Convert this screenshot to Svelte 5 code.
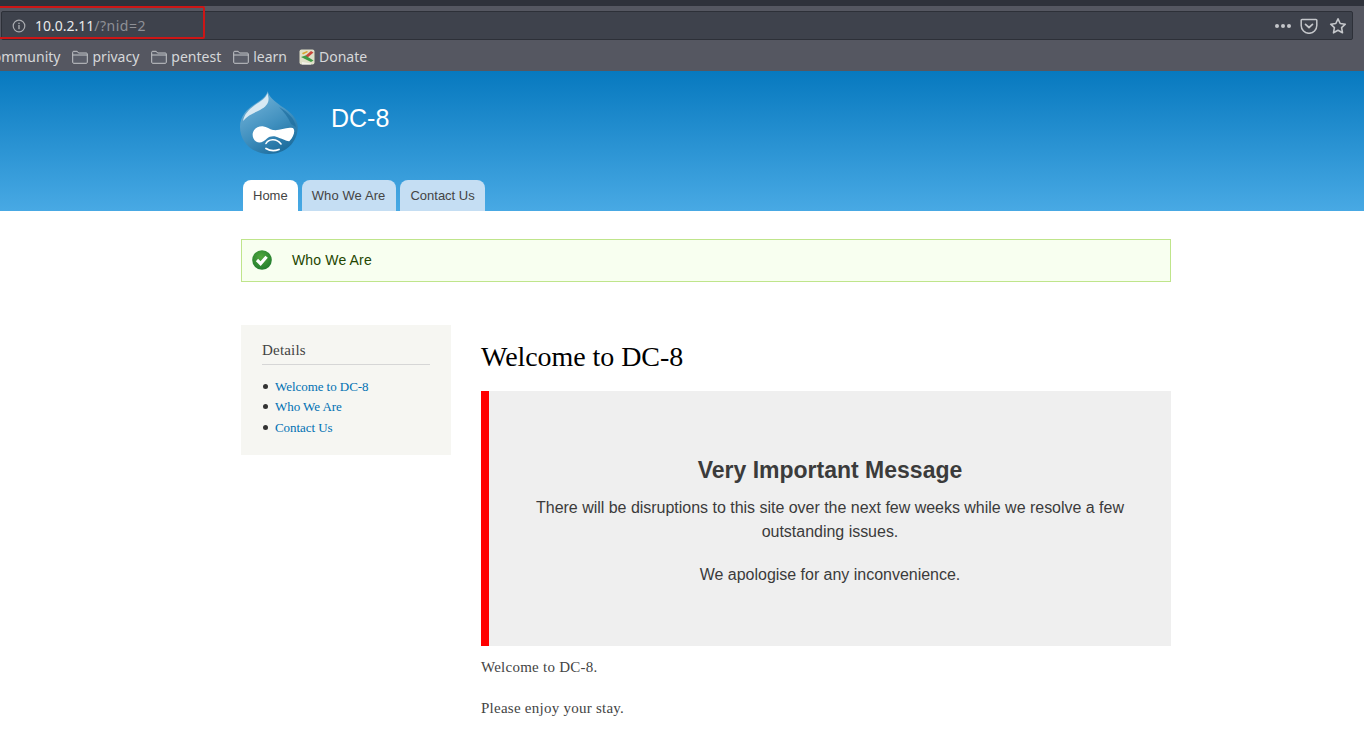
<script>
  const bookmarks = ['privacy', 'pentest', 'learn'];
  const tabs = ['Home', 'Who We Are', 'Contact Us'];
  const links = ['Welcome to DC-8', 'Who We Are', 'Contact Us'];
</script>

<div class="page">
  <div class="chrome">
    <div class="toprim"></div>
    <div class="urlrow">
      <div class="urlbar">
        <svg class="info" width="14" height="14" viewBox="0 0 14 14"><circle cx="7" cy="7" r="5.8" fill="none" stroke="#a9abb0" stroke-width="1.2"/><rect x="6.3" y="6" width="1.4" height="4.2" fill="#a9abb0"/><rect x="6.3" y="3.7" width="1.4" height="1.4" fill="#a9abb0"/></svg>
        <span class="url"><span class="host">10.0.2.11</span><span class="path">/?nid=2</span></span>
        <div class="spacer"></div>
        <div class="dots"><i></i><i></i><i></i></div>
        <svg class="pocket" width="18" height="16" viewBox="0 0 18 16"><path d="M2 1.5h14a.8.8 0 0 1 .8.8v5.2a7.8 7.8 0 0 1-15.600 0V2.300a.8.8 0 0 1 .8-.8z" fill="none" stroke="#c4c6ca" stroke-width="1.500"/><path d="M5.500 6.300 9 9.500l3.500-3.200" fill="none" stroke="#c4c6ca" stroke-width="1.700" stroke-linecap="round" stroke-linejoin="round"/></svg>
        <svg class="star" width="18" height="18" viewBox="0 0 18 18"><path d="M9 1.800l2.200 4.700 5.100.7-3.700 3.500.9 5.100L9 13.300l-4.500 2.500.9-5.100-3.700-3.500 5.100-.7z" fill="none" stroke="#c4c6ca" stroke-width="1.600" stroke-linejoin="round"/></svg>
      </div>
    </div>
    <div class="bookmarks">
      <span class="bm first">community</span>
      {#each bookmarks as b}
        <span class="bm">
          <svg width="16" height="14" viewBox="0 0 16 14"><path d="M.7 12.300V2.300q0-1 1-1h3.500l1.300 1.700h7.800q1 0 1 1v8.300q0 1-1 1H1.700q-1 0-1-1zM.7 5h14.600" fill="#5b5e69" stroke="#c3c5c9" stroke-width="1"/></svg>
          {b}
        </span>
      {/each}
      <span class="bm">
        <svg width="16" height="16" viewBox="0 0 16 16"><rect x="0.500" y="0.500" width="15" height="15" rx="2" fill="#dfe0c8"/><path d="M5 8 12 2l2.500 1.500-7 6z" fill="#c8473c"/><path d="M2 8l10 5 2.500-1.500-8-5z" fill="#3f9a46"/><path d="M3 13l9 1.500v1H3z" fill="#f2f2ea"/><path d="M3 4l5-2 1 1-5 2.500z" fill="#d9a62e"/></svg>
        Donate
      </span>
    </div>
    <div class="redbox"></div>
  </div>

  <header class="hero">
    <div class="inner">
      <div class="brand">
        <svg class="logo" width="60" height="66" viewBox="0 0 60 66">
          <defs>
            <linearGradient id="drop" x1="0.200" y1="0.100" x2="0.700" y2="1"><stop offset="0" stop-color="#6fb0d6"/><stop offset="0.550" stop-color="#3f8fbe"/><stop offset="1" stop-color="#1c6c9c"/></linearGradient>
          </defs>
          <path d="M28.700 1.300C30 7 35 11 42 16 52 22 58.700 29 58.700 37 58.700 53 46 64 30 64 13 64 1 52 1 37 1 26 8 19 16 14 22 10 27 7 28.700 1.300z" fill="url(#drop)"/>
          <path d="M28.500 3C27 8 22 11 16 15 9 20 5 25 4 31 9 25 15 23 21 20 27 17 30 13 29.500 8z" fill="#d8e9f3"/>
          <path d="M40 17C49 22 56 29 57 37L52 34C49 27 45 22 40 17z" fill="#1c6c9c" opacity=".65"/>
          <path d="M13.700 43.500C14.500 39 19 36 23.700 36.300 28 36.700 30.500 39.500 34 40 41 41 47 36.500 53.700 38 56.500 39.500 55.500 46 50.300 51.300 47 51.500 43.500 48.500 40.300 48 35.500 45.500 31 46 28 48.500 25 51.500 21 54 17 51.500 14.500 49.500 13.300 46.500 13.700 43.500z" fill="#fff"/>
          <path d="M27 53.500C29 49.500 37 47.500 42 54" fill="none" stroke="#fff" stroke-width="1.600" stroke-linecap="round"/>
          <path d="M27 58.500C31 61 36 61 40 59.500" fill="none" stroke="#fff" stroke-width="1.800" stroke-linecap="round"/>
        </svg>
        <span class="site">DC-8</span>
      </div>
      <nav class="tabs">
        {#each tabs as t, i}
          <a class="tab" class:active={i === 0}>{t}</a>
        {/each}
      </nav>
    </div>
  </header>

  <main class="inner">
    <div class="status">
      <svg width="20" height="20" viewBox="0 0 20 20"><defs><radialGradient id="ok" cx="0.450" cy="0.350" r="0.700"><stop offset="0" stop-color="#52a83d"/><stop offset="1" stop-color="#1f7a2e"/></radialGradient></defs><circle cx="10" cy="10" r="9.800" fill="url(#ok)"/><path d="M5 10l3.600 3.600 6-6.800" fill="none" stroke="#fff" stroke-width="3.200"/></svg>
      <span>Who We Are</span>
    </div>

    <div class="columns">
      <aside class="side">
        <h2>Details</h2>
        <ul>
          {#each links as l}
            <li><a>{l}</a></li>
          {/each}
        </ul>
      </aside>
      <article class="content">
        <h1>Welcome to DC-8</h1>
        <div class="notice">
          <h3>Very Important Message</h3>
          <p>There will be disruptions to this site over the next few weeks while we resolve a few outstanding issues.</p>
          <p>We apologise for any inconvenience.</p>
        </div>
        <p class="body first">Welcome to DC-8.</p>
        <p class="body">Please enjoy your stay.</p>
      </article>
    </div>
  </main>
</div>

<style>
  :global(body) { margin: 0; background: #fff; overflow: hidden; }
  .page { width: 1364px; height: 743px; overflow: hidden; font-family: "Liberation Sans", sans-serif; }
  .chrome { position: relative; background: #555761; height: 71px; }
  .toprim { height: 6px; background: #2f323b; }
  .urlrow { height: 34px; padding: 5px 11px 0 1px; box-sizing: border-box; }
  .urlbar { height: 29px; background: #3e424c; border: 1px solid #2d3038; border-radius: 2px; display: flex; align-items: center; padding: 0 5px 0 10px; box-sizing: border-box; }
  .info { margin-right: 9px; }
  .url { font-family: "Noto Sans", sans-serif; font-size: 14px; }
  .host { color: #e8e9eb; }
  .path { color: #8e9096; letter-spacing: 0.500px; }
  .spacer { flex: 1; }
  .dots { display: flex; gap: 2px; margin-right: 9px; }
  .dots i { width: 4px; height: 4px; border-radius: 50%; background: #c4c6ca; }
  .pocket { margin-right: 11px; }
  .bookmarks { display: flex; align-items: center; height: 31px; margin-left: -14px; padding-top: 2px; box-sizing: border-box; gap: 12px; font-family: "Noto Sans", sans-serif; font-size: 14px; color: #d6d7da; white-space: nowrap; }
  .bm { display: inline-flex; align-items: center; gap: 4px; }
  .redbox { position: absolute; left: -4px; top: 6px; width: 205px; height: 29px; border: 2px solid #cc1616; border-radius: 2px; }

  .inner { width: 930px; margin: 0 auto; position: relative; left: 24px; }
  .hero { height: 140px; background: linear-gradient(#0779bf, #48a9e4); overflow: hidden; }
  .brand { display: flex; align-items: flex-start; height: 109px; }
  .logo { margin: 19px 0 0 -2px; flex: none; }
  .site { color: #fff; font-size: 25px; line-height: 30px; margin-left: 32px; margin-top: 32px; }
  .tabs { display: flex; gap: 4px; padding-left: 2px; }
  .tab { height: 31px; padding: 0 10px; background: #c5def3; border-radius: 8px 8px 0 0; font-size: 13px; line-height: 32px; color: #444; }
  .tab:nth-child(2) { padding: 0 11px 0 10px; letter-spacing: 0.100px; }
  .tab.active { background: #fff; }

  .status { margin-top: 28px; height: 43px; box-sizing: border-box; border: 1px solid #bfe58b; background: #f8fff0; display: flex; align-items: center; padding: 0 0 2px 10px; font-size: 14px; letter-spacing: 0.150px; color: #234600; }
  .status span { margin-left: 20px; }
  .columns { display: flex; margin-top: 44px; gap: 30px; }
  .side { width: 210px; height: 130px; margin-top: -1px; background: #f6f6f2; box-sizing: border-box; padding: 15px 21px; font-family: "Liberation Serif", serif; flex: none; }
  .side h2 { margin: 0; font-size: 15px; font-weight: normal; color: #444; line-height: 20px; padding-bottom: 4px; border-bottom: 1px solid #d6d6d6; letter-spacing: 0.200px; }
  .side ul { list-style: none; margin: 11.900px 0 0; padding: 0 0 0 13px; font-size: 13px; line-height: 20.500px; color: #333; }
  .side li { position: relative; letter-spacing: -0.050px; }
  .side li::before { content: ""; position: absolute; left: -12px; top: 7px; width: 5px; height: 5px; border-radius: 50%; background: #333; }
  .side a { color: #0071b3; }
  .content { flex: 1; min-width: 0; font-family: "Liberation Serif", serif; }
  h1 { margin: 13px 0 0; font-size: 28px; font-weight: normal; line-height: 36px; color: #000; letter-spacing: -0.060px; }
  .notice { margin-top: 16px; height: 255px; box-sizing: border-box; background: #efefef; border-left: 8px solid #f00; padding: 66px 40px 0; text-align: center; font-family: "Liberation Sans", sans-serif; color: #3b3b3b; }
  .notice h3 { margin: 0 0 13px; font-size: 23px; line-height: 26px; font-weight: bold; }
  .notice p { margin: 0 0 19px; font-size: 16px; line-height: 24px; letter-spacing: -0.020px; }
  .body { margin: 0 0 19.500px; font-size: 15px; line-height: 21px; color: #444; letter-spacing: 0.250px; }
  .body.first { margin-top: 11px; }
</style>
